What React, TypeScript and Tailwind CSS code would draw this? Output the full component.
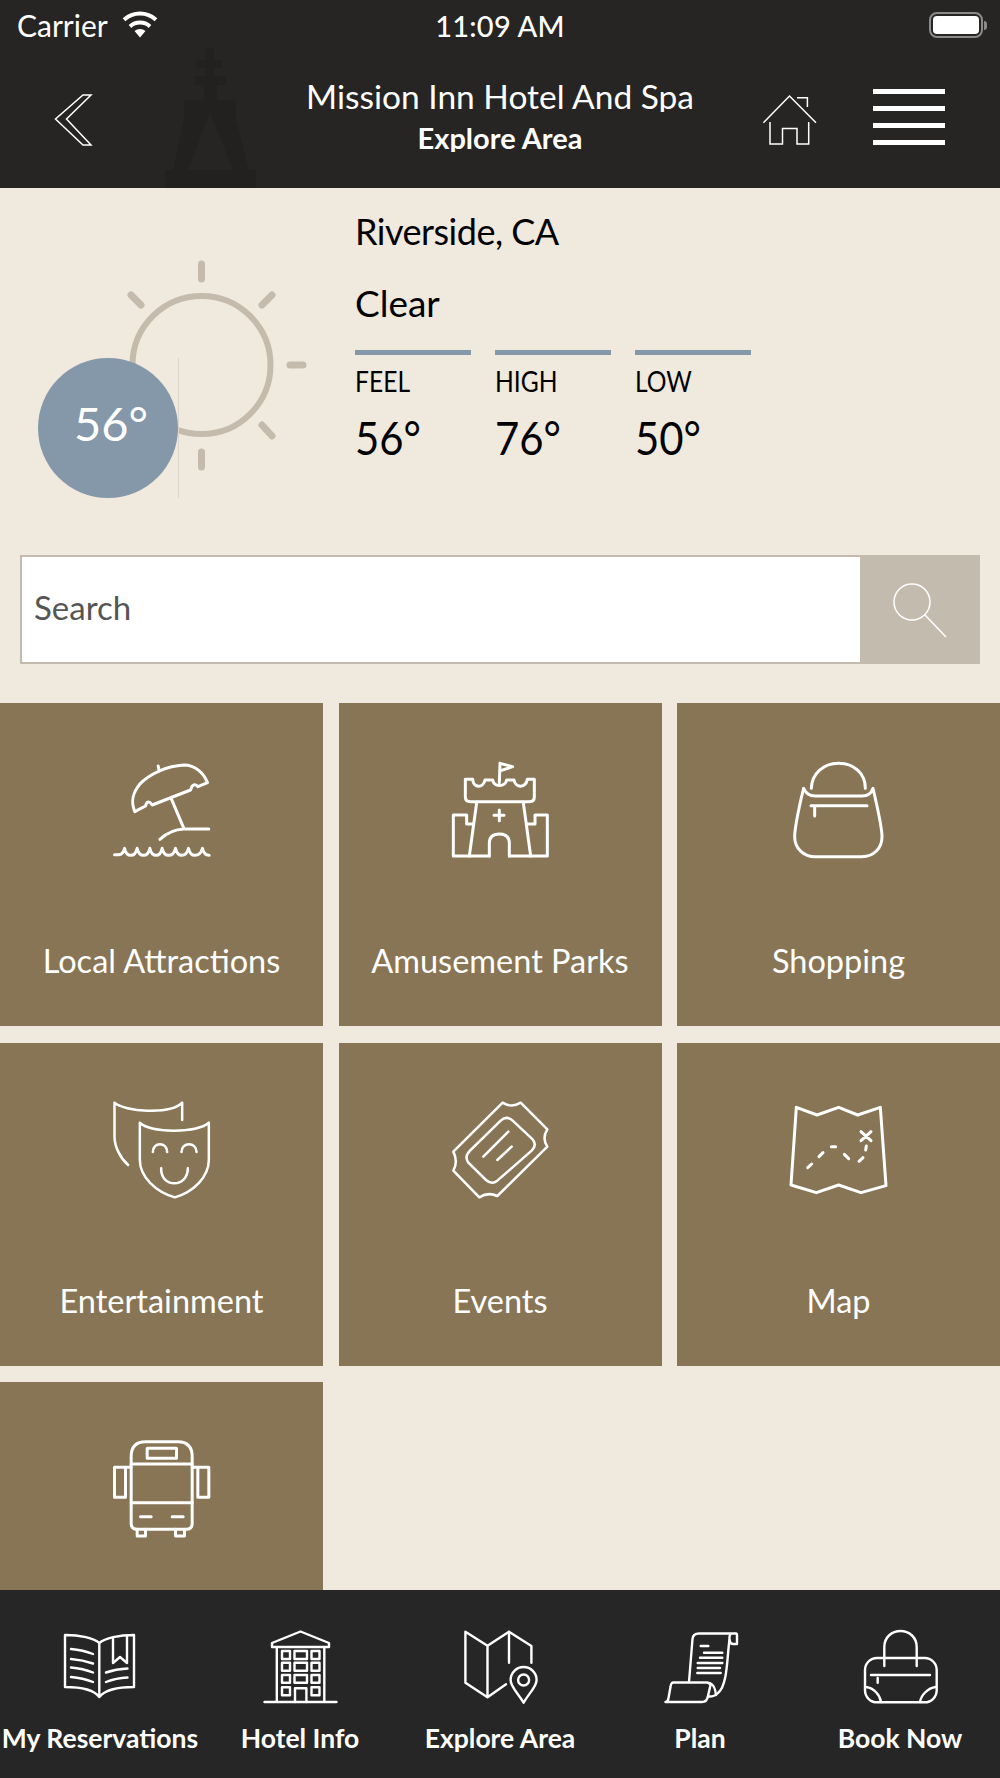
import type { ReactNode } from 'react'

function TileSvg({ box, width = 9, children }: { box: string; width?: number; children: ReactNode }) {
  return (
    <svg
      viewBox={box}
      fill="none"
      stroke="#fff"
      strokeWidth={width}
      strokeLinecap="round"
      strokeLinejoin="round"
      className="w-[120px] h-[120px] mt-[47px] shrink-0"
    >
      {children}
    </svg>
  )
}

function NavSvg({ children }: { children: ReactNode }) {
  return (
    <svg
      viewBox="0 0 100 84"
      fill="none"
      stroke="#fff"
      strokeWidth={2.4}
      strokeLinecap="round"
      strokeLinejoin="round"
      className="w-[100px] h-[84px] shrink-0"
    >
      {children}
    </svg>
  )
}

const TILES: { label: string; icon: ReactNode }[] = [
  {
    label: 'Local Attractions',
    icon: (
      <TileSvg box="64.5 30 360 360">
        <path d="M163 215C150 185 155 160 180 130C210 100 260 78 310 75C345 75 370 100 381 128L352 140C345 130 335 132 330 150L215 195C208 185 200 180 195 198Z" />
        <path d="M233 78L236 92M272 175L310 265M238 298C260 278 285 268 310 267H385" />
        <path d="M102 344H112Q127 346 132 325Q137 346 151 346Q165 346 170 325Q175 346 189 346Q203 346 208 325Q213 346 227 346Q240 346 245 325Q250 346 264 346Q280 346 285 325Q290 346 304 346Q318 346 324 325Q329 346 343 346Q360 346 366 325Q370 346 386 346" />
      </TileSvg>
    ),
  },
  {
    label: 'Amusement Parks',
    icon: (
      <TileSvg box="0 0 360 360">
        <path d="M76 88H98C100 115 130 115 135 90H158C162 112 195 112 200 90H222C226 115 258 115 262 88H283V140Q283 155 268 155H92Q76 155 76 140Z" />
        <path d="M180 40L178 98M180 40L218 50L182 62" />
        <path d="M110 158L88 318M250 158L272 318M148 318V280Q148 252 178 252Q208 252 208 280V318" />
        <path d="M148 318H40V195H80V222H100M208 318H322V195H285V222H262M178 180V212M162 196H192" />
      </TileSvg>
    ),
  },
  {
    label: 'Shopping',
    icon: (
      <TileSvg box="56 30 360 360">
        <path d="M153 145C155 100 190 70 235 70C280 70 315 100 315 145" />
        <path d="M130 145C138 160 145 168 165 168H305C325 168 332 160 338 145C345 175 365 260 365 290C365 325 340 350 305 350H165C130 350 103 325 103 290C103 260 122 175 130 145Z" />
        <path d="M152 197H320M163 197V228" />
      </TileSvg>
    ),
  },
  {
    label: 'Entertainment',
    icon: (
      <TileSvg box="34.5 30 360 360" width={7.5}>
        <path d="M72 68C100 95 240 105 275 68V120M72 68V170C72 200 90 235 113 255" />
        <path d="M148 128C180 160 320 160 355 128V240C355 290 310 335 253 352C195 335 148 290 148 240Z" />
        <path d="M187 216C187 185 230 185 230 216M273 216C273 185 318 185 318 216M212 265C210 325 292 325 292 265" />
      </TileSvg>
    ),
  },
  {
    label: 'Events',
    icon: (
      <TileSvg box="0 0 360 360" width={7.5}>
        <path d="M188 38Q215 55 242 38L322 118Q305 145 322 170L172 318Q145 305 118 322L40 242Q55 215 40 185Z" />
        <path d="M182 92Q200 75 218 92L278 148Q292 165 275 182L172 272Q155 285 138 270L85 218Q72 200 90 182Z" />
        <path d="M130 200L205 125M172 210L215 170" />
      </TileSvg>
    ),
  },
  {
    label: 'Map',
    icon: (
      <TileSvg box="26 0 360 360">
        <path d="M78 52L140 75L205 52L262 75L330 52L347 287L272 308L205 285L138 308L62 285Z" />
        <path d="M272 125L302 152M302 125L272 152M112 233L124 222M146 200L158 188M183 170H196M222 193L235 206M266 214L278 203M286 180L288 168" />
      </TileSvg>
    ),
  },
  {
    label: '',
    icon: (
      <TileSvg box="34.5 27 360 360">
        <path d="M122 110Q122 65 165 65H262Q305 65 305 110V310Q305 328 288 328H140Q122 328 122 310Z" />
        <path d="M170 85H258V115H170ZM122 132H305M122 248H305M150 290H182M245 290H278" />
        <path d="M122 142H72V232H105V142M305 142H355V232H322V142M140 328V348H165V328M255 328V348H282V328" />
      </TileSvg>
    ),
  },
]

const NAV: { label: string; icon: ReactNode }[] = [
  {
    label: 'My Reservations',
    icon: (
      <NavSvg>
        <path d="M49.3 18C44 13 30 10 15 10V62C30 62 44 65 49.3 72C55 65 69 62 84 62V10C69 10 55 13 49.3 18V72" />
        <path d="M63 13V38L70 32L77 38V11" />
        <path d="M21 24Q33 25 43 29M21 34Q33 35 43 38.5M21 42.5Q33 43.5 43 47.5M21 52Q33 53 43 57M56 47.5Q66 44 77.5 43.5M56 57Q66 53 77.5 52.5" />
      </NavSvg>
    ),
  },
  {
    label: 'Hotel Info',
    icon: (
      <NavSvg>
        <path d="M50.5 6.5L22 18V22H79V18ZM26.8 22V77M74.3 22V77M14.5 77H86.5" />
        <path d="M32 26H40V34H32ZM44.5 26H57V34H44.5ZM61.5 26H69.5V34H61.5ZM32 37.7H40V45.7H32ZM44.5 37.7H57V45.7H44.5ZM61.5 37.7H69.5V45.7H61.5ZM32 50H40V57.7H32ZM44.5 50H57V57.7H44.5ZM61.5 50H69.5V57.7H61.5ZM32 62.3H40V70.3H32ZM61.5 62.3H69.5V70.3H61.5ZM45 77V63.3H56.4V77" />
      </NavSvg>
    ),
  },
  {
    label: 'Explore Area',
    icon: (
      <NavSvg>
        <path d="M56 59.3L37.5 72.3L15.4 57.7V6.7L37.5 20.7L59 6.7L81.4 21V37.7M37.5 20.7V72.3M59 6.7V37.7" />
        <path d="M73.6 77.7C68 68 60.6 62 60.6 55A13 13 0 0 1 86.6 55C86.6 62 79 68 73.6 77.7Z" />
        <circle cx="73.6" cy="55" r="5.5" />
      </NavSvg>
    ),
  },
  {
    label: 'Plan',
    icon: (
      <NavSvg>
        <path d="M39 57L42.5 14Q43 8.5 49 8.5H86Q87 8.5 87 10V19H83Q80 19 79.5 15Q79 8.5 82 8.5" />
        <path d="M79.5 15C77 30 78 60 68 68Q64 72 58 71.5" />
        <path d="M15.5 77H52Q57 77 58 71L60.5 60Q59 57 56 57.5H24Q21 57 20.5 62L18.5 73Q18 77 15.5 77ZM60 58Q65 60 66 70" />
        <path d="M50.7 21H58.3M54 27.7H72.3M50 32.7H72.3M47.7 38H72.3M47.7 43H70M47.3 48H70.7" />
      </NavSvg>
    ),
  },
  {
    label: 'Book Now',
    icon: (
      <NavSvg>
        <path d="M34.3 41V22C34.3 12 42 6 50.5 6C59 6 66.7 12 66.7 22V41" />
        <rect x="15" y="33" width="71.7" height="44.3" rx="12" />
        <path d="M21 50H80M27.7 53V57.7M16 62C24 63 30 70 31 77M85.7 62C78 63 71 70 70 77" />
      </NavSvg>
    ),
  },
]

function StatusBar() {
  return (
    <div className="grid grid-cols-[1fr_auto_1fr] items-center h-[50px] text-white px-[13px]">
      <div className="flex items-center gap-[14px] ml-[4px] text-[30px]">
        <span className="leading-none">Carrier</span>
        <svg viewBox="0 0 36 28" fill="none" stroke="#fff" strokeWidth={4} className="w-[36px] h-[28px] -mt-[2px]">
          <path d="M2 9.7A24 24 0 0 1 34 9.7M8 16.4A15 15 0 0 1 28 16.4" />
          <path d="M18 27.5L12.5 21A8.5 8.5 0 0 1 23.5 21Z" fill="#fff" stroke="none" />
        </svg>
      </div>
      <span className="text-[29px] font-medium leading-none tracking-[0.2px]">11:09 AM</span>
      <div className="flex items-center justify-end">
        <div className="w-[54px] h-[26px] border-2 border-[#8a8a8a] rounded-[8px] p-[2px]">
          <div className="w-full h-full bg-white rounded-[4px]" />
        </div>
        <div className="w-[3px] h-[9px] bg-[#8a8a8a] rounded-r-full ml-[1px]" />
      </div>
    </div>
  )
}

function Header() {
  return (
    <header className="relative bg-[#262524] h-[188px] shrink-0 overflow-hidden">
      <svg viewBox="165 48 91 140" fill="#232020" className="absolute left-[165px] top-[48px] w-[91px] h-[140px]">
        <path
          fillRule="evenodd"
          d="M205 48H214V60H222V68H214V76H226V85H217V100H236V120L249 170H256V188H165V170H173L184 120V100H204V85H195V76H205V68H196V60H205ZM210 112L188 170H233Z"
        />
      </svg>
      <div className="relative">
        <StatusBar />
        <div className="grid grid-cols-[1fr_auto_1fr] items-center h-[138px] mt-[1px]">
          <svg viewBox="0 0 40 52" fill="none" stroke="#fff" strokeWidth={1.5} className="w-[40px] h-[52px] ml-[53px]">
            <path d="M30 1H38L13.5 25L38 51H30L2.5 25Z" />
          </svg>
          <div className="flex flex-col items-center text-white -mt-[10px]">
            <span className="block h-[34px] overflow-hidden text-[33.5px] leading-[36px] whitespace-nowrap">
              Mission Inn Hotel And Spa
            </span>
            <span className="block h-[30px] mt-[10px] overflow-hidden text-[29px] leading-[32px] font-bold whitespace-nowrap">
              Explore Area
            </span>
          </div>
          <div className="flex items-center justify-end gap-[55px] pr-[55px]">
            <svg viewBox="762 93 56 52" fill="none" stroke="#fff" strokeWidth={1.5} className="w-[56px] h-[52px]">
              <path d="M763.4 121.7L789.5 95L816 121.7M770 121V143H782.5V127.5H797V143H808.7V121M797 96.7H807.4V106" />
            </svg>
            <div className="flex flex-col gap-[12px] -mt-[6px]">
              <div className="w-[72px] h-[5px] bg-white" />
              <div className="w-[72px] h-[5px] bg-white" />
              <div className="w-[72px] h-[5px] bg-white" />
              <div className="w-[72px] h-[5px] bg-white" />
            </div>
          </div>
        </div>
      </div>
    </header>
  )
}

function Reading({ label, value }: { label: string; value: string }) {
  return (
    <div className="w-[116px]">
      <div className="h-[5px] bg-[#8598a9]" />
      <div className="mt-[10px] text-[29px] leading-[32px] text-black origin-left scale-x-[0.85]">{label}</div>
      <div className="mt-[16px] text-[46px] leading-[50px] text-black origin-left scale-x-[0.91]">{value}</div>
    </div>
  )
}

function Weather() {
  return (
    <section className="flex items-start h-[367px] pl-[38px] pt-[21px] shrink-0">
      <div className="relative w-[270px] h-[240px] mt-[49px] shrink-0">
        <svg viewBox="38 258 270 240" fill="none" stroke="#c4bbad" strokeLinecap="round" className="w-[270px] h-[240px]">
          <circle cx="201.5" cy="365" r="69" strokeWidth={6} />
          <path
            strokeWidth={7}
            d="M201.5 264V279M201.5 452V467M290 365H303M131 295L141 305M272 295L262 305M262 425L272 436"
          />
        </svg>
        <div className="absolute left-0 top-[100px] w-[141px] h-[140px] border-r border-[#ddd5c9]">
          <div className="w-[140px] h-[140px] rounded-full bg-[#8598a9] flex items-center justify-center text-white text-[47px] leading-none pb-[10px] pl-[6px]">
            56°
          </div>
        </div>
      </div>
      <div className="ml-[47px]">
        <div className="text-[36px] leading-[44px] tracking-[-0.5px] text-black">Riverside, CA</div>
        <div className="mt-[28px] text-[37px] leading-[44px] text-black">Clear</div>
        <div className="flex gap-[24px] mt-[25px]">
          <Reading label="FEEL" value="56°" />
          <Reading label="HIGH" value="76°" />
          <Reading label="LOW" value="50°" />
        </div>
      </div>
    </section>
  )
}

function SearchBar() {
  return (
    <div className="flex h-[109px] mx-[20px] border-2 border-[#c3bbae] bg-white shrink-0">
      <input
        placeholder="Search"
        className="flex-1 min-w-0 pl-[12px] pb-[4px] text-[33px] text-[#555] placeholder:text-[#555] outline-none bg-white"
      />
      <div className="w-[120px] bg-[#c3bbae] shrink-0 -my-[2px] -mr-[2px]">
        <svg viewBox="0 0 120 109" fill="none" stroke="#fff" strokeWidth={1.5} className="w-[120px] h-[109px]">
          <circle cx="52" cy="47" r="18" />
          <path d="M65 60L86 82" />
        </svg>
      </div>
    </div>
  )
}

export default function App() {
  return (
    <div className="flex flex-col h-[1778px] w-[1000px] overflow-hidden bg-[#f0e9de] font-[family-name:Lato,sans-serif]">
      <Header />
      <main className="flex-1 min-h-0 overflow-hidden">
        <Weather />
        <SearchBar />
        <div className="grid grid-cols-3 gap-x-[15.5px] gap-y-[16.5px] mt-[39px]">
          {TILES.map((t, i) => (
            <div key={i} className="flex flex-col items-center h-[323px] bg-[#877555] text-white">
              {t.icon}
              <span className="mt-[71px] text-[32.5px] leading-[40px] whitespace-nowrap">{t.label}</span>
            </div>
          ))}
        </div>
      </main>
      <nav className="grid grid-cols-5 h-[188px] shrink-0 bg-[#262626]">
        {NAV.map((n) => (
          <div key={n.label} className="flex flex-col items-center pt-[35px] text-white">
            {n.icon}
            <span className="mt-[11px] text-[26.5px] leading-[36px] font-bold whitespace-nowrap">{n.label}</span>
          </div>
        ))}
      </nav>
    </div>
  )
}
